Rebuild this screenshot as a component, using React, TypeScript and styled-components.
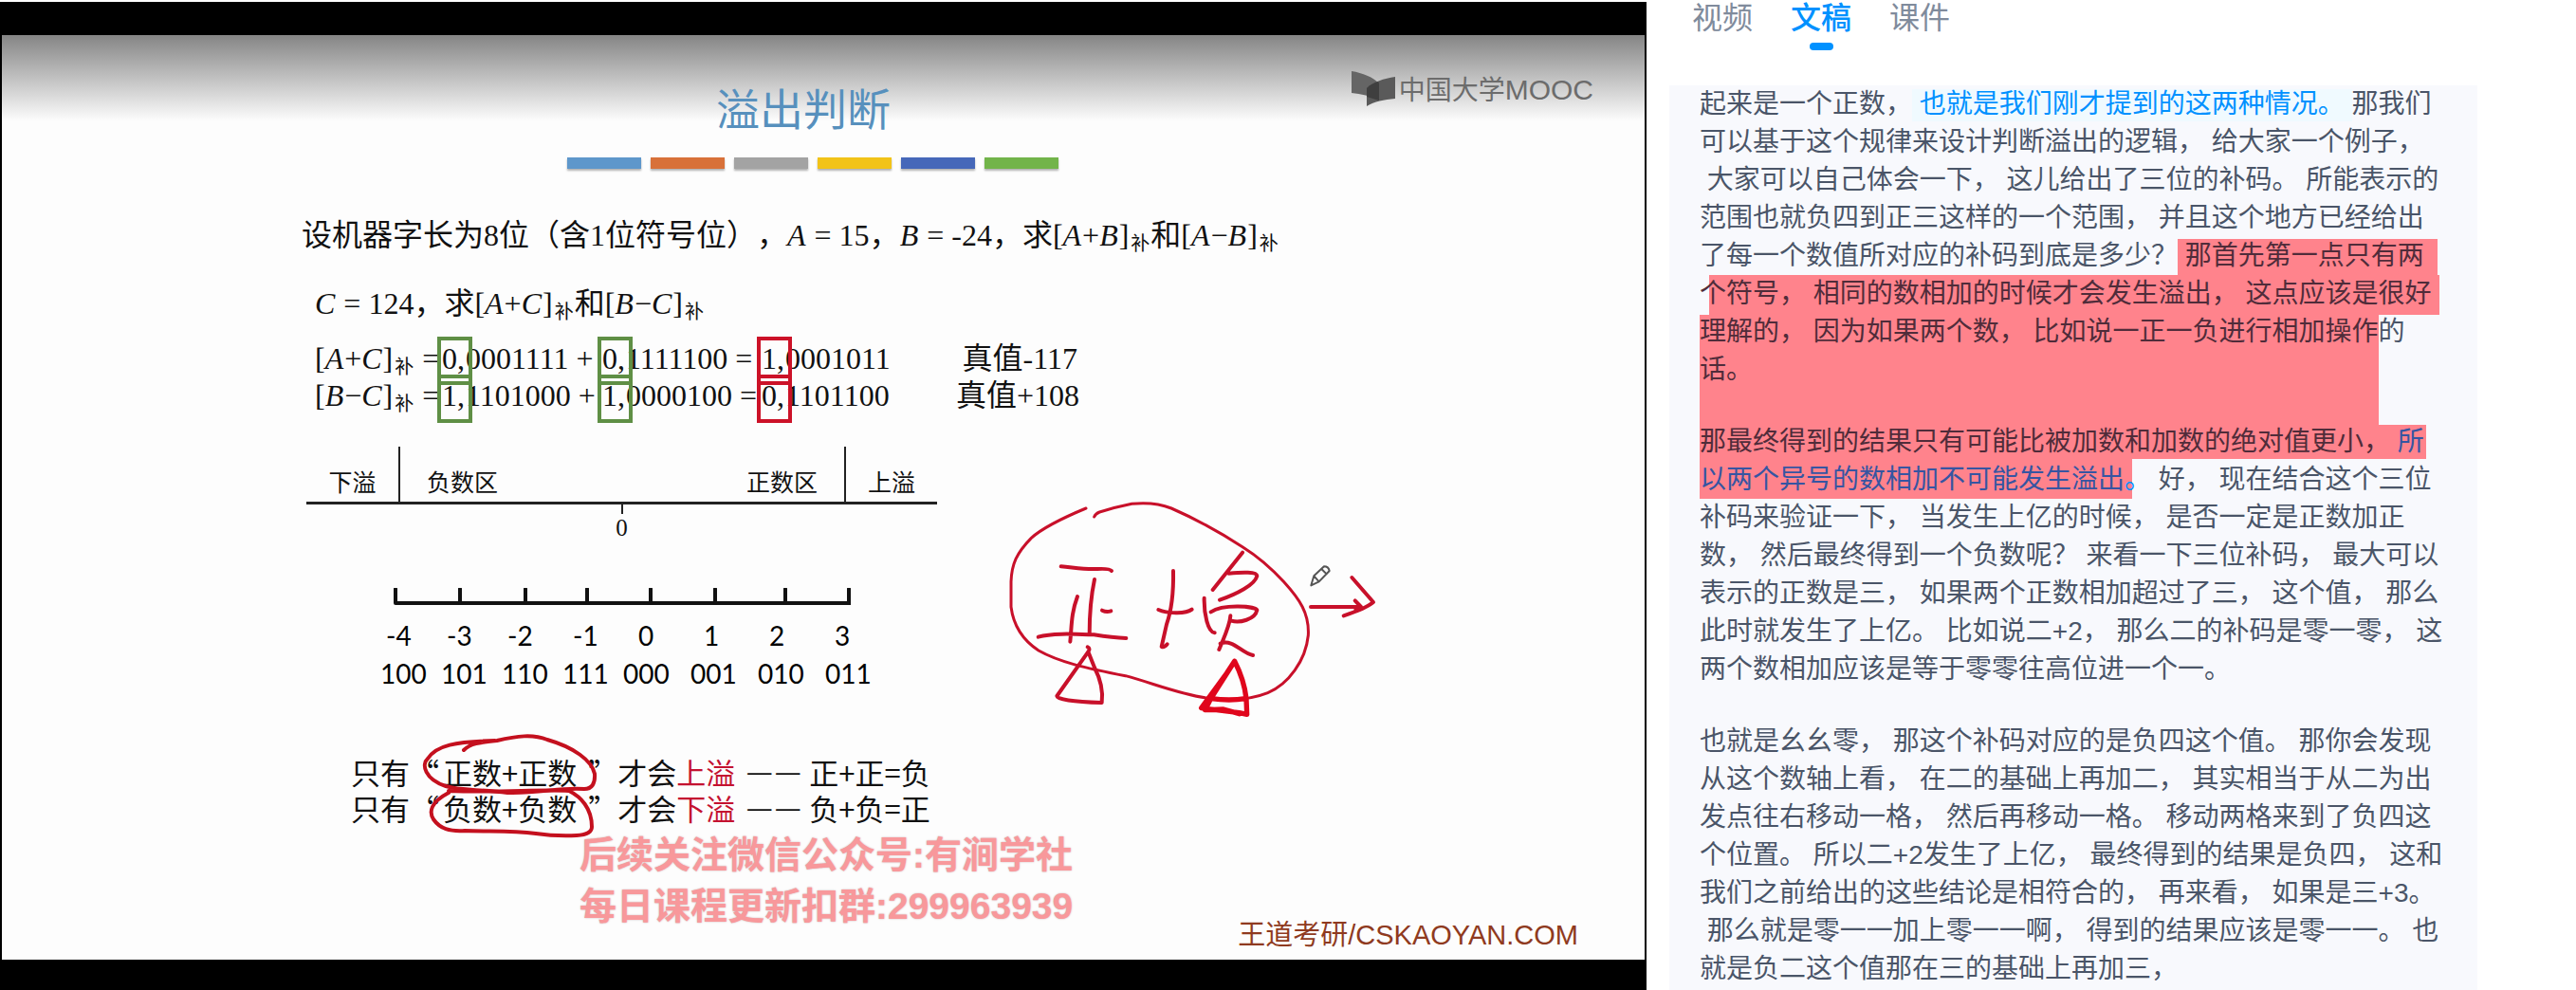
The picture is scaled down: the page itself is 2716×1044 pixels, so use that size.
import React from "react";
import styled, { createGlobalStyle } from "styled-components";

const sans = `"Liberation Sans", "Noto Sans CJK SC", sans-serif`;
const serif = `"Liberation Serif", "Noto Sans CJK SC", serif`;
const cjk = `"Noto Sans CJK SC", sans-serif`;

const GlobalStyle = createGlobalStyle`
  * { box-sizing: border-box; }
  body { margin: 0; background: #fff; font-family: ${sans}; text-spacing-trim: space-all; }
`;

const Page = styled.main`
  display: grid;
  grid-template-columns: 1736fr 980fr;
  min-height: 100vh;
`;

const Player = styled.section`
  display: flex;
  flex-direction: column;
  margin-top: 2px;
  padding: 35px 2px 32px;
  background: #000;
`;

const Slide = styled.article`
  position: relative;
  flex: 1;
  overflow: hidden;
  padding: 31px 54px 0 316px;
  background: linear-gradient(#858585, #fdfdfd 91px) #fdfdfd;
  color: #111;
  font-family: ${serif};
  white-space: nowrap;
`;

const Header = styled.header`
  display: flex;
  justify-content: space-between;
  align-items: flex-start;
  padding-left: 437px;
`;

const Title = styled.h1`
  margin: 0;
  padding: 10px 0 4px;
  color: #5790bd;
  font: 400 46px/68px ${cjk};
`;

const Brand = styled.div`
  display: flex;
  align-items: center;
  gap: 4px;
  height: 52px;
  color: #6c6c6c;
  font: 400 28px/52px ${cjk};
`;

const BrandLatin = styled.span`
  font: 400 30px/52px "Liberation Sans", sans-serif;
`;

const Stripes = styled.div`
  display: flex;
  gap: 10px;
  margin: 16px 0 0 280px;
`;

const Stripe = styled.span<{ $color: string }>`
  width: 78px;
  height: 12px;
  background: ${(p) => p.$color};
  box-shadow: 0 2px 2px rgba(0, 0, 0, 0.3);
`;

const Statement = styled.p<{ $indent?: boolean }>`
  margin: ${(p) => (p.$indent ? "24px 0 0 14px" : "46px 0 0")};
  font-size: 32px;
  line-height: 48px;
`;

const Variable = styled.em`
  padding-right: 1px;
`;

const Sub = styled.sub`
  font-size: 20px;
  line-height: 1;
  margin: 0 1px 0 2px;
  vertical-align: -5px;
`;

const Sums = styled.div`
  margin: 15px 0 0 14px;
`;

const SumRow = styled.div`
  display: grid;
  grid-template-columns: 129px 30px 139px 30px 138px 30px 180px 128px;
  font-size: 32px;
  line-height: 39px;
`;

const Sign = styled.span<{ $color: string; $drop: boolean }>`
  position: relative;
  padding-left: 5px;
  &::after {
    content: "";
    position: absolute;
    left: 0;
    top: ${(p) => (p.$drop ? "-3px" : "-4px")};
    width: 29px;
    height: 43px;
    border: 4px solid ${(p) => p.$color};
  }
`;

const TrueValue = styled.span`
  text-align: right;
`;

const Zones = styled.div`
  display: grid;
  grid-template-columns: 97px 472px 96px;
  width: 665px;
  margin: 34px 0 0 5px;
  border-bottom: 3px solid #222;
  font-size: 25px;
  line-height: 34px;
`;

const Zone = styled.div<{ $middle?: boolean }>`
  display: flex;
  justify-content: ${(p) => (p.$middle ? "space-between" : "center")};
  padding: 22px ${(p) => (p.$middle ? "28px" : "0")} 2px;
  border: solid #222;
  border-width: ${(p) => (p.$middle ? "0 2px" : "0")};
`;

const Origin = styled.div`
  display: flex;
  flex-direction: column;
  align-items: center;
  width: 665px;
  margin-left: 5px;
  font-size: 25px;
  line-height: 30px;
  &::before {
    content: "";
    width: 2px;
    height: 10px;
    background: #222;
  }
`;

const Axis = styled.svg`
  display: block;
  margin: 48px 0 12px 97px;
`;

const Scale = styled.div<{ $codes?: boolean }>`
  display: grid;
  grid-template-columns: ${(p) =>
    p.$codes ? "repeat(4, 64px) repeat(4, 71px)" : "repeat(2, 64px) repeat(6, 69px)"};
  margin-left: ${(p) => (p.$codes ? "83px" : "89px")};
  color: #000;
  font: 400 28px/40px Lato, sans-serif;
`;

const Rules = styled.div`
  margin: 65px 0 0 52px;
  font: 400 31px/38px ${cjk};
`;

const Rule = styled.p`
  display: flex;
  margin: 0;
`;

const Quoted = styled.span`
  padding: 0 12px 0 4px;
`;

const Red = styled.span`
  color: #c41230;
`;

const Dashes = styled.span`
  display: flex;
  gap: 5px;
  padding: 0 10px 0 13px;
  font: 700 25px/38px "Liberation Serif", serif;
`;

const Watermark = styled.p`
  margin: 4px 0 0 293px;
  color: #f8989b;
  font: 700 39px/54px ${sans};
  text-shadow: 0 0 2px #c9b3b5;
`;

const Credit = styled.p`
  margin: -14px 0 0;
  padding-right: 16px;
  text-align: right;
  color: #8f3a20;
  font: 400 29px/34px ${sans};
`;

const Ink = styled.svg<{ $x: number; $y: number }>`
  position: absolute;
  left: ${(p) => p.$x}px;
  top: ${(p) => p.$y}px;
  pointer-events: none;
`;

const Side = styled.aside`
  display: flex;
  flex-direction: column;
  padding: 0 104px 0 24px;
`;

const Tabs = styled.div`
  display: flex;
  gap: 40px;
  height: 90px;
  padding-left: 24px;
`;

const Tab = styled.button<{ $active?: boolean }>`
  display: flex;
  flex-direction: column;
  align-items: center;
  gap: 12px;
  height: 53px;
  padding: 0;
  border: 0;
  background: none;
  color: ${(p) => (p.$active ? "#0091ff" : "#808b9c")};
  font: ${(p) => (p.$active ? 500 : 400)} 32px/33px ${cjk};
  &::after {
    content: "";
    width: 25px;
    height: 8px;
    border-radius: 4px;
    background: ${(p) => (p.$active ? "#0091ff" : "transparent")};
  }
`;

const Transcript = styled.div`
  position: relative;
  isolation: isolate;
  flex: 1;
  padding: 0 30px 0 32px;
  background: #f8f9fd;
  color: #4a5568;
  font-size: 28px;
  line-height: 40px;
`;

const Paragraph = styled.p`
  margin: 0 0 36px;
  white-space: pre-wrap;
  &:last-of-type {
    margin: 0;
  }
`;

const Line = styled.span`
  display: block;
`;

const Current = styled.span`
  padding-bottom: 3px;
  background: #f0faff;
  color: #0091ff;
`;

const Marked = styled.span<{ $active?: boolean }>`
  color: ${(p) => (p.$active ? "#3655a2" : "#502c3a")};
`;

const Active = styled.span`
  color: #0091ff;
`;

const Highlight = styled.i<{ $x: number; $y: number; $w: number; $h: number }>`
  position: absolute;
  z-index: -1;
  left: ${(p) => p.$x}px;
  top: ${(p) => p.$y}px;
  width: ${(p) => p.$w}px;
  height: ${(p) => p.$h}px;
  background: #ff838c;
`;

const stripes = ["#5e97cb", "#d87139", "#a3a3a3", "#f2c318", "#4668b9", "#72b44a"];
const ticks = [2, 70, 139, 204, 271, 339, 413, 480];
const green = "#5f8f45";
const red = "#cc1228";

const highlights = [
  [536, 162, 274, 38],
  [42, 200, 770, 42],
  [32, 242, 716, 116],
  [32, 358, 766, 36],
  [32, 394, 456, 42],
];

const Bracket = ({ a, op, b }: { a: string; op: string; b: string }) => (
  <>
    [<Variable>{a}</Variable>
    {op}
    <Variable>{b}</Variable>]<Sub>补</Sub>
  </>
);

type SumProps = { a: string; op: string; terms: [string, string][]; value: string; drop?: boolean };

const Sum = ({ a, op, terms, value, drop = false }: SumProps) => (
  <SumRow>
    <span>
      <Bracket a={a} op={op} b="C" /> =
    </span>
    {terms.map(([sign, rest], i) => (
      <React.Fragment key={i}>
        <Sign $color={i === 2 ? red : green} $drop={drop}>
          {sign},
        </Sign>
        <span>{rest}</span>
      </React.Fragment>
    ))}
    <TrueValue>真值{value}</TrueValue>
  </SumRow>
);

const RuleLine = ({ kind, result, word }: { kind: string; result: string; word: string }) => (
  <Rule>
    只有“
    <Quoted>
      {kind}数+{kind}数
    </Quoted>
    ”才会<Red>{word}</Red>
    <Dashes>
      <span>—</span>
      <span>—</span>
    </Dashes>
    {kind}+{kind}={result}
  </Rule>
);

const Lecture = () => (
  <Slide>
    <Header>
      <Title>溢出判断</Title>
      <Brand>
        <svg width="46" height="38" viewBox="0 0 46 38" aria-hidden="true">
          <path d="M0 0C12 2 22 6 29 13V31C20 26 10 24 0 23Z" fill="#656565" />
          <path d="M16 37V18C23 11 34 8 46 6V29C34 30 24 32 16 37Z" fill="#5a5a5a" />
          <path d="M16 18C20 14 24 12 28 11L29 13V31L16 27Z" fill="#3f3f3f" />
        </svg>
        <span>
          中国大学<BrandLatin>MOOC</BrandLatin>
        </span>
      </Brand>
    </Header>
    <Stripes>
      {stripes.map((c) => (
        <Stripe key={c} $color={c} />
      ))}
    </Stripes>
    <Statement>
      设机器字长为8位（含1位符号位），<Variable>A</Variable> = 15，<Variable>B</Variable> = -24，求
      <Bracket a="A" op="+" b="B" />和<Bracket a="A" op="−" b="B" />
    </Statement>
    <Statement $indent>
      <Variable>C</Variable> = 124，求
      <Bracket a="A" op="+" b="C" />和<Bracket a="B" op="−" b="C" />
    </Statement>
    <Sums>
      <Sum
        a="A"
        op="+"
        terms={[["0", "0001111 +"], ["0", "1111100 ="], ["1", "0001011"]]}
        value="-117"
      />
      <Sum
        a="B"
        op="−"
        terms={[["1", "1101000 +"], ["1", "0000100 ="], ["0", "1101100"]]}
        value="+108"
        drop
      />
    </Sums>
    <Zones>
      <Zone>下溢</Zone>
      <Zone $middle>
        <span>负数区</span>
        <span>正数区</span>
      </Zone>
      <Zone>上溢</Zone>
    </Zones>
    <Origin>0</Origin>
    <Axis width="484" height="18" viewBox="0 0 484 18" stroke="#111" strokeWidth="4" fill="none">
      <path d="M2 16H482" />
      {ticks.map((x) => (
        <path key={x} d={`M${x} 1V16`} strokeWidth="4" strokeLinecap="round" />
      ))}
    </Axis>
    <Scale>
      {["-4", "-3", "-2", "-1", "0", "1", "2", "3"].map((n) => (
        <span key={n}>{n}</span>
      ))}
    </Scale>
    <Scale $codes>
      {["100", "101", "110", "111", "000", "001", "010", "011"].map((n) => (
        <span key={n}>{n}</span>
      ))}
    </Scale>
    <Rules>
      <RuleLine kind="正" word="上溢" result="负" />
      <RuleLine kind="负" word="下溢" result="正" />
    </Rules>
    <Watermark>
      后续关注微信公众号:有涧学社
      <br />
      每日课程更新扣群:299963939
    </Watermark>
    <Credit>王道考研/CSKAOYAN.COM</Credit>

    <Ink
      $x={998}
      $y={443}
      width="500"
      height="300"
      viewBox="0 0 1500 900"
      fill="none"
      stroke="#c8102a"
      strokeLinecap="round"
      strokeLinejoin="round"
      strokeWidth="12"
    >
      <path
        strokeWidth="9"
        d="M435 168C370 195 300 228 262 262C215 310 200 345 198 400V480C205 535 235 585 285 618C350 655 440 675 560 698C650 722 740 760 830 770C900 778 960 772 1010 752C1075 725 1130 650 1138 570C1142 500 1110 455 1060 400C1010 345 970 315 930 290C860 245 790 205 705 168C665 152 620 150 580 154C540 162 510 170 478 180Q465 185 461 195"
      />
      <path d="M356 352C400 356 430 362 470 360Q510 358 516 366M462 393C452 440 446 500 446 568M408 447C388 500 390 540 385 590M486 491Q500 498 514 493M284 575C330 562 400 566 460 568Q520 578 562 579" />
      <path d="M440 607Q450 612 442 622L343 762Q345 778 485 783Q492 730 462 672L442 622" />
      <path d="M711 366C712 420 706 490 690 535L674 606Q682 610 692 598M664 489C690 500 750 504 770 488" />
      <path d="M930 308L836 426M886 374C930 370 975 368 976 382C970 410 910 440 858 458M809 452C808 500 820 560 842 562M830 496C870 470 970 478 976 490C970 520 920 532 895 524M892 508C890 540 870 580 856 615M860 596C900 580 925 625 963 633" />
      <path
        stroke="#e0061c"
        strokeWidth="16"
        d="M905 652L880 690L800 800L920 815L944 820L942 770Q935 710 905 652L830 770L812 806L870 804L920 818M830 770Q890 778 940 770"
      />
      <path d="M1146 480H1305L1286 460M1305 480L1288 490M1276 387L1344 465Q1320 485 1250 508" />
      <g stroke="#555" strokeWidth="6">
        <path d="M1147 412L1156 382L1188 352Q1202 352 1205 366L1172 400ZM1156 382L1172 400M1180 360L1196 376" />
      </g>
    </Ink>
    <Ink
      $x={338}
      $y={713}
      width="400"
      height="150"
      viewBox="0 0 400 150"
      fill="none"
      stroke="#c4101e"
      strokeLinecap="round"
      strokeLinejoin="round"
      strokeWidth="4"
    >
      <path d="M149 41C156 34 165 33 184 31C205 26 222 24 237 30C265 38 284 52 287 66Q288 82 276 82C250 80 230 87 195 86C165 82 145 84 130 79C108 72 104 56 111 50C120 36 140 32 182 31" />
      <path d="M133 86C114 96 112 106 117 114C124 124 134 127 150 126C180 127 200 126 225 129Q245 132 268 131Q284 130 284 122C284 102 272 90 260 84C230 82 190 86 133 84" />
    </Ink>
  </Slide>
);

const opening = [
  "可以基于这个规律来设计判断溢出的逻辑， 给大家一个例子，",
  " 大家可以自己体会一下， 这儿给出了三位的补码。 所能表示的",
  "范围也就负四到正三这样的一个范围， 并且这个地方已经给出",
];

const example = [
  "补码来验证一下， 当发生上亿的时候， 是否一定是正数加正",
  "数， 然后最终得到一个负数呢？ 来看一下三位补码， 最大可以",
  "表示的正数是三， 如果两个正数相加超过了三， 这个值， 那么",
  "此时就发生了上亿。 比如说二+2， 那么二的补码是零一零， 这",
  "两个数相加应该是等于零零往高位进一个一。",
];

const closing = [
  "也就是幺幺零， 那这个补码对应的是负四这个值。 那你会发现",
  "从这个数轴上看， 在二的基础上再加二， 其实相当于从二为出",
  "发点往右移动一格， 然后再移动一格。 移动两格来到了负四这",
  "个位置。 所以二+2发生了上亿， 最终得到的结果是负四， 这和",
  "我们之前给出的这些结论是相符合的， 再来看， 如果是三+3。",
  " 那么就是零一一加上零一一啊， 得到的结果应该是零一一。 也",
  "就是负二这个值那在三的基础上再加三，",
];

const Lines = ({ of }: { of: string[] }) => (
  <>
    {of.map((text) => (
      <Line key={text}>{text}</Line>
    ))}
  </>
);

export default function App() {
  return (
    <>
      <GlobalStyle />
      <Page lang="zh-CN">
        <Player>
          <Lecture />
        </Player>
        <Side>
          <Tabs role="tablist">
            <Tab role="tab">视频</Tab>
            <Tab role="tab" $active aria-selected="true">
              文稿
            </Tab>
            <Tab role="tab">课件</Tab>
          </Tabs>
          <Transcript>
            <Paragraph>
              <Line>
                起来是一个正数，<Current> 也就是我们刚才提到的这两种情况。 </Current>那我们
              </Line>
              <Lines of={opening} />
              <Line>
                了每一个数值所对应的补码到底是多少？<Marked> 那首先第一点只有两</Marked>
              </Line>
              <Line>
                <Marked>个符号， 相同的数相加的时候才会发生溢出， 这点应该是很好</Marked>
              </Line>
              <Line>
                <Marked>理解的， 因为如果两个数， 比如说一正一负进行相加操作</Marked>的
              </Line>
              <Line>
                <Marked>话。</Marked>
              </Line>
            </Paragraph>
            <Paragraph>
              <Line>
                <Marked>那最终得到的结果只有可能比被加数和加数的绝对值更小， </Marked>
                <Marked $active>所</Marked>
              </Line>
              <Line>
                <Marked $active>以两个异号的数相加不可能发生溢出</Marked>
                <Active>。</Active> 好， 现在结合这个三位
              </Line>
              <Lines of={example} />
            </Paragraph>
            <Paragraph>
              <Lines of={closing} />
            </Paragraph>
            {highlights.map(([x, y, w, h]) => (
              <Highlight key={y} $x={x} $y={y} $w={w} $h={h} />
            ))}
          </Transcript>
        </Side>
      </Page>
    </>
  );
}
